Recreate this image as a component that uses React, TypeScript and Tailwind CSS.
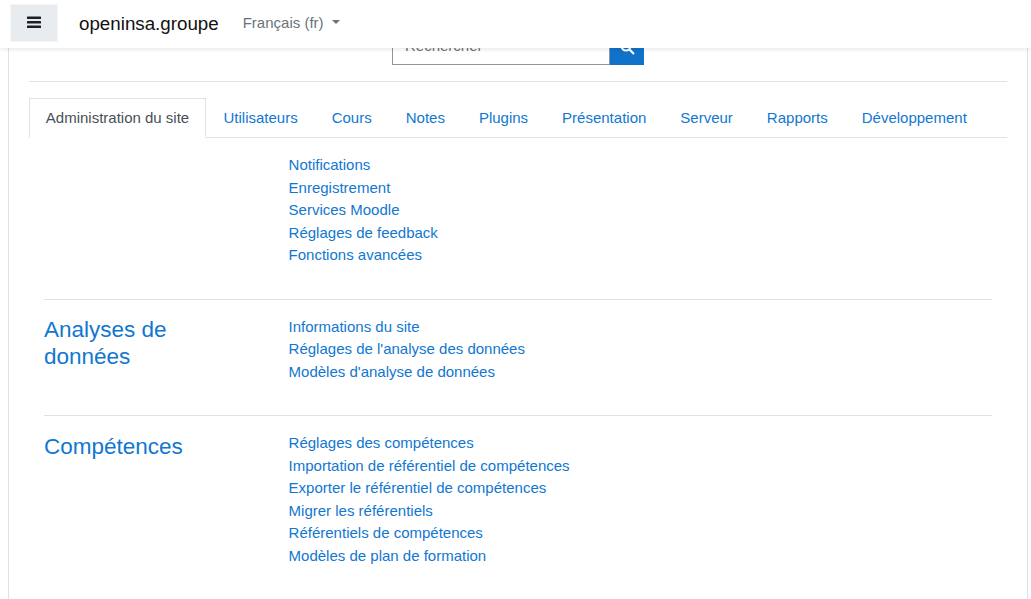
import React from "react";

const tabs = ["Utilisateurs", "Cours", "Notes", "Plugins", "Présentation", "Serveur", "Rapports", "Développement"];

function Links({ items }: { items: string[] }) {
  return (
    <ul className="flex flex-col">
      {items.map((t) => (
        <li key={t} className="h-[22.5px] leading-[22.5px]">
          <a className="text-[#1177d1]" href="#">{t}</a>
        </li>
      ))}
    </ul>
  );
}

function Section({ title, items, className, titleClass }: { title?: string[]; items: string[]; className?: string; titleClass?: string }) {
  return (
    <div className={`flex ${className ?? ""}`}>
      <div className="w-[244.6px] shrink-0">
        {title && (
          <h4 className={`text-[22.5px] leading-[27px] text-[#1177d1] font-normal m-0 ${titleClass ?? ""}`}>
            {title.map((l) => <div key={l}>{l}</div>)}
          </h4>
        )}
      </div>
      <Links items={items} />
    </div>
  );
}

export default function App() {
  return (
    <div className="relative h-[599px] w-[1031px] overflow-hidden bg-white text-[15px] text-[#373a3c] font-['Liberation_Sans',Arial,sans-serif]">
      <header className="absolute top-0 left-0 right-0 z-10 h-[48px] bg-white shadow-[0_2px_4px_rgba(0,0,0,0.08)] flex items-center">
        <button className="ml-[10px] mt-[-2px] w-[48px] h-[38px] bg-[#e9ecef] border border-[#f3f5f6] flex items-center justify-center">
          <svg width="14" height="13" viewBox="0 0 14 13" fill="#1d2125" className="mt-[-1px]">
            <rect x="0" y="0.5" width="14" height="2.5" rx="0.5" />
            <rect x="0" y="5" width="14" height="2.5" rx="0.5" />
            <rect x="0" y="9.5" width="14" height="2.5" rx="0.5" />
          </svg>
        </button>
        <span className="ml-[21px] text-[18.75px] text-[#111] leading-none">openinsa.groupe</span>
        <span className="ml-[24px] text-[#6a737b] flex items-center leading-none mt-[-4px]">
          Français (fr)
          <span className="ml-[8px] w-0 h-0 border-x-[4.5px] border-x-transparent border-t-[4.5px] border-t-[#6a737b]" />
        </span>
      </header>

      <main className="mx-[8px] h-[700px] w-[1020px] border-x border-[#dee2e6] px-[20px] pt-[29px]">
        <div className="flex justify-center">
          <div className="flex h-[36px]">
            <div className="w-[218px] border border-[#8f959e] pl-[12px] leading-[32px] text-[#6a737b]">Rechercher</div>
            <div className="w-[34px] bg-[#1072c8] flex items-center justify-center">
              <svg width="15" height="15" viewBox="0 0 15 15" fill="none" stroke="white" strokeWidth="2.2">
                <circle cx="6" cy="6" r="4.5" />
                <path d="M9.5 9.5 14 14" />
              </svg>
            </div>
          </div>
        </div>
        <div className="mt-[16px] border-t border-[#dee2e6]" />

        <nav className="mt-[16px] flex h-[40px] border-b border-[#dee2e6]">
          <div className="h-[40px] w-[177px] mr-[0.5px] border border-[#dee2e6] border-b-white bg-white flex items-center justify-center text-[#495057]">
            Administration du site
          </div>
          {tabs.map((t) => (
            <a key={t} className="px-[17px] flex items-center text-[#1177d1] h-[39px] pt-[1px]" href="#">{t}</a>
          ))}
        </nav>

        <div className="px-[15px] pt-[16px]">
          <div className="pb-[32.5px]">
            <Section items={["Notifications", "Enregistrement", "Services Moodle", "Réglages de feedback", "Fonctions avancées"]} />
          </div>
          <div className="pb-[32px]">
            <Section className="border-t border-[#dee2e6] pt-[15.5px]" title={["Analyses de", "données"]} items={["Informations du site", "Réglages de l'analyse des données", "Modèles d'analyse de données"]} />
          </div>
          <Section className="border-t border-[#dee2e6] pt-[16px]" titleClass="mt-[1px]" title={["Compétences"]} items={["Réglages des compétences", "Importation de référentiel de compétences", "Exporter le référentiel de compétences", "Migrer les référentiels", "Référentiels de compétences", "Modèles de plan de formation"]} />
        </div>
      </main>
    </div>
  );
}
